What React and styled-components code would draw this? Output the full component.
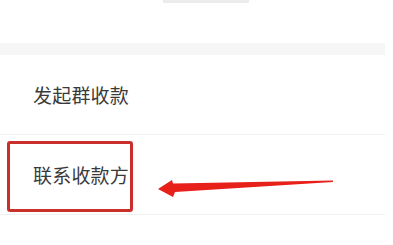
import React from "react";
import styled, { createGlobalStyle } from "styled-components";

const GlobalStyle = createGlobalStyle`
  html, body {
    margin: 0;
    padding: 0;
    background: #ffffff;
  }
  body {
    font-family: "Noto Sans CJK SC", "Noto Sans", sans-serif;
  }
`;

const Page = styled.div`
  position: relative;
  width: 393px;
  height: 245px;
  overflow: hidden;
  background: #ffffff;
`;

const Sheet = styled.div`
  width: 385px;
  display: flex;
  flex-direction: column;
`;

const Handle = styled.div`
  align-self: center;
  margin-left: 27px;
  width: 86px;
  height: 3px;
  background: #ececec;
`;

const Band = styled.div`
  margin-top: 40px;
  height: 12px;
  background: #f6f6f6;
`;

const Row = styled.div`
  position: relative;
  height: 80px;
  display: flex;
  align-items: center;
  padding-left: 33px;
  padding-top: ${(p) => p.$shift || 0}px;
  box-sizing: border-box;
  border-bottom: 1px solid #f1f1f1;
  font-size: 19px;
  color: #3a3a3a;
  letter-spacing: 0.2px;
`;

const Highlight = styled.div`
  position: absolute;
  left: 7px;
  top: 6px;
  width: 126px;
  height: 71px;
  box-sizing: border-box;
  border: 3px solid #c9302c;
  border-radius: 3px;
`;

const Arrow = styled.svg`
  position: absolute;
  left: 155px;
  top: 175px;
`;

const items = ["发起群收款", "联系收款方"];

export default function App() {
  return (
    <>
      <GlobalStyle />
      <Page>
        <Sheet>
          <Handle />
          <Band />
          <Row $shift={-4}>{items[0]}</Row>
          <Row $shift={-2}>
            {items[1]}
            <Highlight />
          </Row>
        </Sheet>
        <Arrow width="182" height="25" viewBox="0 0 182 25">
          <polygon
            points="3,14 17,5 18,8.5 178,5.5 178,7 20,17 18,22"
            fill="#e8201a"
          />
        </Arrow>
      </Page>
    </>
  );
}
